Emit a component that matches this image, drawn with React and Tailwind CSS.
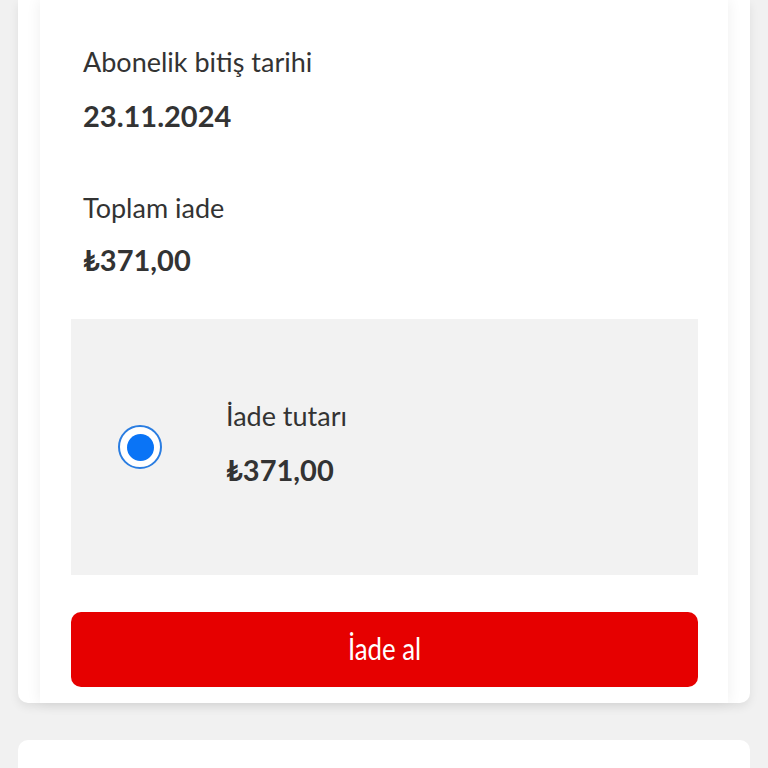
export default function App() {
  const font = { fontFamily: "Lato, 'Open Sans', sans-serif" };
  return (
    <div className="w-[768px] h-[768px] overflow-hidden bg-[#f1f1f1] text-[#333333]" style={font}>
      <div className="mx-[18px] bg-white rounded-b-[10px] shadow-[0_4px_10px_rgba(0,0,0,0.08)] px-[22px]">
        <div className="bg-white shadow-[0_0_14px_rgba(0,0,0,0.07)] pl-[31px] pr-[30px] pb-[16px]">
          <div className="pl-[12px] pt-[44px]">
            <div className="text-[27px] leading-[36px]">Abonelik bitiş tarihi</div>
            <div className="mt-[16px] text-[29px] leading-[40px] font-bold">23.11.2024</div>
            <div className="mt-[54px] text-[27px] leading-[36px]">Toplam iade</div>
            <div className="mt-[14px] text-[29px] leading-[40px] font-bold">₺371,00</div>
          </div>
          <div className="mt-[39px] h-[256px] bg-[#f2f2f2] flex items-center pl-[47px]">
            <div className="w-[44px] h-[44px] rounded-full border-2 border-[#2a7de1] bg-white flex items-center justify-center shrink-0">
              <div className="w-[27px] h-[27px] rounded-full bg-[#0a74f6]" />
            </div>
            <div className="ml-[64px] pb-[6px]">
              <div className="text-[27px] leading-[36px]">İade tutarı</div>
              <div className="mt-[16px] text-[29px] leading-[40px] font-bold">₺371,00</div>
            </div>
          </div>
          <button className="mt-[37px] w-full h-[75px] rounded-[10px] bg-[#e60000] text-white text-[30px] leading-none flex items-center justify-center pb-[4px]">
            <span className="inline-block scale-x-[0.86]">İade al</span>
          </button>
        </div>
      </div>
      <div className="mx-[18px] mt-[37px] h-[60px] bg-white rounded-t-[10px]" />
    </div>
  );
}
